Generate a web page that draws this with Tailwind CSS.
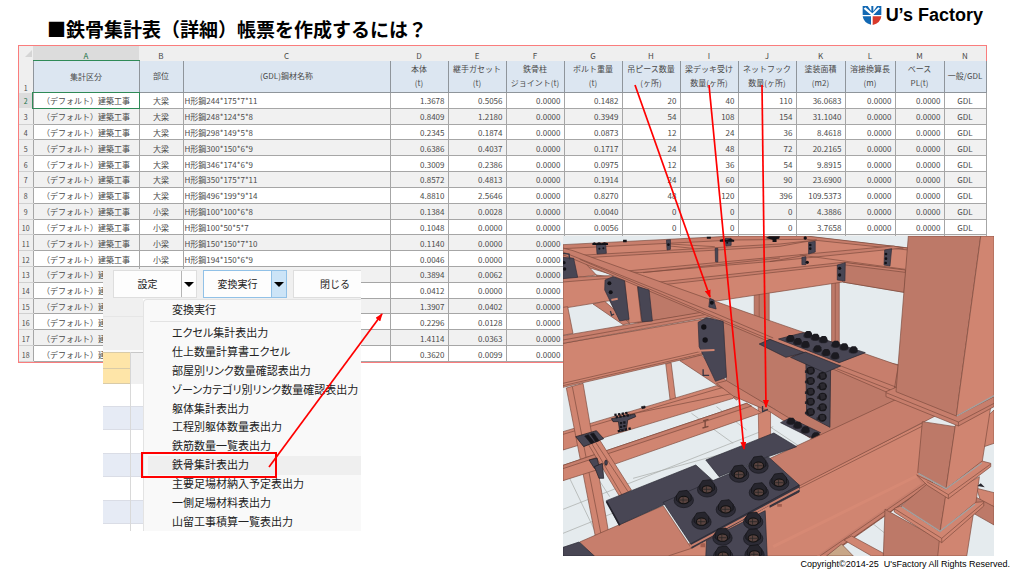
<!DOCTYPE html>
<html lang="ja">
<head>
<meta charset="utf-8">
<title>鉄骨集計表（詳細）帳票</title>
<script src="https://cdn.jsdelivr.net/npm/@tailwindcss/browser@4"></script>
</head>
<body class="bg-white font-['Noto_Sans_CJK_JP','Noto_Sans',sans-serif] text-black">
<main class="relative flex min-h-screen flex-col overflow-hidden">
  <header class="flex h-[45px] items-start justify-between pl-[47px] pr-[41px]">
    <h1 class="pt-[15px] text-[19px] leading-7 font-bold whitespace-nowrap">■鉄骨集計表（詳細）帳票を作成するには？</h1>
    <div class="flex items-center gap-1 pt-[3px]">
      <svg class="h-5 w-5" viewBox="0 0 60 60" aria-hidden="true">
        <path fill="#1268b3" d="M2 3H17L28 19V3H34V19L45 3H58V30H34L54 10L49 7L31 25L10 7L5 11L27 30H2Z"/>
        <path fill="#1268b3" d="M2 34H27V59Q5 54 2 34Z"/>
        <path fill="#d93a2b" d="M32 34H58Q56 54 32 60Z"/>
      </svg>
      <span class="font-['Liberation_Sans',sans-serif] text-lg leading-6 font-bold">U’s Factory</span>
    </div>
  </header>

  <section class="mr-[37px] ml-[18px] border border-[#fa7d7d]" aria-label="鉄骨集計表">
    <table class="h-[316px] w-full table-fixed border-collapse text-[8px] leading-[13px] text-[#4a4a4a]">
      <colgroup>
        <col class="w-[14px]"><col class="w-[106px]"><col class="w-[44px]"><col class="w-[207px]">
        <col class="w-[58px]"><col class="w-[58px]"><col class="w-[58px]"><col class="w-[58px]"><col class="w-[58px]"><col class="w-[58px]"><col class="w-[58px]">
        <col class="w-[49px]"><col class="w-[50px]"><col class="w-[49px]"><col class="w-[42px]">
      </colgroup>
      <thead id="head"></thead>
      <tbody id="rows"></tbody>
    </table>
  </section>

  <footer class="mt-auto flex justify-end pr-[14px] pb-[5px] font-['Liberation_Sans',sans-serif] text-[9px] leading-[14px] whitespace-pre">Copyright©2014-25  U'sFactory All Rights Reserved.</footer>

  <!-- Conversion menu laid over the sheet -->
  <section class="absolute top-[269px] left-[103px] flex h-[262px] w-[258px] flex-col overflow-hidden bg-white text-[#222]">
    <div class="flex h-[30px] shrink-0 gap-[6px] bg-[#f0f0f0] pt-px pb-px pl-[10px] text-[10px]">
      <div class="flex h-7 w-[84px] shrink-0 border border-[#dedede] bg-[#fdfdfd]">
        <button class="flex-1 pb-[2px]">設定</button>
        <button class="flex w-[15px] items-center justify-center border-l border-[#b5b5b5]" aria-label="設定のメニュー"><svg class="h-[5px] w-[10px]" viewBox="0 0 10 5"><path d="M0 0H10L5 5Z"/></svg></button>
      </div>
      <div class="flex h-7 w-[84px] shrink-0 border border-[#91c1e7] bg-[#fdfdfd]">
        <button class="flex-1 pb-[2px]">変換実行</button>
        <button class="flex w-[15px] items-center justify-center border-l border-[#91c1e7] bg-[#cce4f7]" aria-label="変換実行のメニュー"><svg class="h-[5px] w-[10px]" viewBox="0 0 10 5"><path d="M0 0H10L5 5Z"/></svg></button>
      </div>
      <button class="h-7 w-[84px] shrink-0 border border-[#dedede] bg-[#fdfdfd] pb-[2px]">閉じる</button>
    </div>
    <div class="flex min-h-0 flex-1">
      <div class="flex w-10 shrink-0 flex-col">
        <div class="h-[18px] border-b border-[#e6e6e6] bg-[#f0f0f0]"></div>
        <div class="h-[35px] border-b-2 border-[#fafafa] bg-[#f0f0f0]"></div>
        <div class="flex h-8">
          <div class="flex w-7 flex-col border-r border-[#d6d6d6]"><div class="flex-1 border-y border-[#d9cba8] bg-[#fee5a8]"></div><div class="flex-1 border-b border-[#d9cba8] bg-[#fee5a8]"></div></div>
          <div class="flex-1 border-t border-[#c8c8c8] bg-[#f0f0f0]"></div>
        </div>
        <div class="relative flex flex-1 flex-col">
          <div class="h-[22px]"></div><div class="h-6 border-y border-[#dadde6] bg-[#e6ebf5]"></div>
          <div class="h-[23px]"></div><div class="h-6 border-y border-[#dadde6] bg-[#e6ebf5]"></div>
          <div class="h-[23px]"></div><div class="h-6 border-y border-[#dadde6] bg-[#e6ebf5]"></div>
          <div class="absolute inset-y-0 left-[27px] w-px bg-[#d9d9d9]"></div>
        </div>
      </div>
      <div class="flex flex-1 flex-col rounded-tl border-t border-l border-[#e3e3e3] bg-[#f9f9f9] text-[11px] leading-4 [font-feature-settings:'palt']" role="menu">
        <button role="menuitem" class="h-[21px] pb-1 pl-7 text-left">変換実行</button>
        <hr class="ml-[6px] border-[#e3e3e3]">
        <div class="mt-[2px] flex flex-1 flex-col" id="menu"></div>
      </div>
    </div>
  </section>

  <!-- Steel frame model -->
  <svg class="absolute top-[236px] left-[55%] h-[320px] w-[42.1%]" viewBox="10 18 1292 960" preserveAspectRatio="none" role="img" aria-label="鉄骨モデル">
    <defs>
      <g id="bolt"><ellipse cy="6" rx="29" ry="22" fill="#2c2b35" stroke="#17161c" stroke-width="2"/><path d="M-22-8L-14-21L10-24L22-10V6L10 14H-12L-22 6Z" fill="#26252d" stroke="#101014" stroke-width="2"/><ellipse cy="5" rx="15" ry="11" fill="#59433f" stroke="#111" stroke-width="3"/><path d="M-2-4V14M-12 5H12" stroke="#222" stroke-width="2"/></g>
      <g id="nut"><ellipse rx="14" ry="8" cy="4" fill="#2b2932"/><path d="M-10-5L-4-10H7L12-4V5L6 10H-6L-11 5Z" fill="#1b1a20"/></g>
      <g id="side"><path d="M-17 3H0" stroke="#29272e" stroke-width="8"/><ellipse rx="13" ry="12" fill="#18171b"/><path d="M-8-7L6-9L9 5L-5 9Z" fill="#2b2930"/></g>
    </defs>
    <rect x="10" y="18" width="1292" height="960" fill="#e5ebee"/>
    <g stroke="#a5a7a4" stroke-width="2" fill="none">
      <path d="M10 838L640 590M10 910L380 760M30 745L110 912M60 660L150 800M395 550L520 640M470 530L560 600M220 745L640 630M630 590L720 650M900 850L975 910"/>
    </g>
    <!-- distant columns and rails -->
    <g stroke="#8c5142" stroke-width="2">
      <path fill="#bd7968" d="M583 190H628V290H583ZM815 155H838V350H815Z"/>
      <path fill="#c77e6c" d="M598 190V280M826 158V340"/>
      <path fill="#d08571" d="M595 530H632V635H597Z"/>
    </g>
    <!-- roof beams -->
    <g stroke="#7b4a3d" stroke-width="2">
      <path fill="#d08571" d="M10 48L520 20H750L1045 54L1032 187L848 156L470 213L380 200L10 90Z"/>
      <path fill="#bd7968" d="M852 97L1038 122L1032 187L848 156Z"/>
      <path fill="#c77e6c" d="M10 44L520 18H740L1045 54V60L740 28L520 30L10 56Z"/>
      <path fill="#c77e6c" d="M60 76L660 42L770 30L720 38L660 49L80 83ZM190 124L1000 48L1030 54L660 92L240 128ZM290 157L850 97L1036 120V127L850 104L320 163Z"/>
      <path fill="none" d="M330 42L465 50M330 48L400 55M720 75L1036 118M250 128L660 84M630 95L740 75"/>
    </g>
    <!-- left bays -->
    <g stroke="#7b4a3d" stroke-width="2">
      <path fill="#bd7968" d="M110 135L230 150L450 245L240 278L180 270Z"/>
      <path fill="#c77e6c" d="M10 75L60 82L110 135L10 148Z"/>
      <path fill="#d08571" d="M10 148L150 138L175 208L10 235Z"/>
      <path fill="#c77e6c" d="M10 143L160 137V144L10 156ZM100 222L135 214L210 280L190 284Z"/>
      <path fill="#d08571" d="M10 232L24 230L40 310L10 316ZM195 150L232 160L245 275L208 280Z"/>
      <path fill="#d08571" d="M10 340L460 262L470 365L10 472Z"/>
      <path fill="#c77e6c" d="M10 317L430 246L462 258L10 340Z"/>
      <path fill="none" d="M10 330L445 252M10 460L420 365M10 467L465 362"/>
      <path fill="#c77e6c" d="M360 392L425 375L545 500L530 510L490 478Z"/>
      <path fill="#d08571" d="M318 402L334 398L348 510H331Z"/>
    </g>
    <!-- lower rails and column -->
    <g stroke="#7b4a3d" stroke-width="2">
      <path fill="#d08571" d="M10 605L470 467L530 490L520 505L10 660Z"/>
      <path fill="none" d="M10 613L490 472M200 555L520 490"/>
      <path fill="#d08571" d="M20 474L70 460L148 915L108 925Z"/>
      <path fill="none" d="M38 470L125 918"/>
      <path fill="#d08571" d="M10 706L560 520L605 548L155 706L10 752Z"/>
      <path fill="#c77e6c" d="M10 706L560 520L575 528L10 716Z"/>
      <path fill="#d08571" d="M84 640L120 630L215 780L180 800Z"/>
      <path fill="none" d="M94 637L188 797M106 634L205 785"/>
      <path fill="none" d="M436 573V592M430 573L446 568M428 594L446 589" stroke-width="4"/>
    </g>
    <g fill="#484654" stroke="#19181e" stroke-width="2">
      <path d="M48 620L110 602L132 626L72 650ZM88 690L112 684L118 708L104 715ZM155 566L225 552L228 560L204 570L200 600L180 605L176 575L160 575Z"/>
      <path fill="#17161c" d="M75 618L86 614L104 637L94 641ZM92 612L102 609L118 632L108 636ZM245 530L256 528V534L247 536Z"/>
      <path d="M104 710L128 700L132 745H118Z"/><ellipse cx="139" cy="698" rx="4" ry="8"/>
    </g>
    <path d="M164 555L208 548M168 562L212 555M174 604L215 595M184 576V600M194 574V598" stroke="#17161c" stroke-width="7" stroke-dasharray="7 4"/>
    <!-- primary diagonal girder -->
    <g stroke="#7b4a3d" stroke-width="2">
      <path fill="#bd7968" d="M490 275L640 330L1045 410L1150 520L1020 520L780 630L640 535L500 458Z"/>
      <path fill="#c77e6c" d="M10 54L40 62L455 210L630 272L1015 406L1000 495L640 340L10 74Z"/>
      <path fill="none" d="M10 66L450 243L640 324M60 88L440 250L640 333M830 640L1010 560M840 640L1140 510M835 405L1010 472M830 416L1005 485"/>
      <path fill="#c77e6c" d="M470 460L500 452L790 625L775 640L630 545L520 498Z"/>
    </g>
    <!-- gusset plates -->
    <g fill="#484654" stroke="#302e39" stroke-width="2">
      <path d="M10 82L42 85L54 142L10 146Z"/><path d="M136 150L160 140L194 152L208 268L180 273L135 180Z"/><path d="M234 170L268 180L278 273L247 275Z"/>
      <path d="M415 277L440 263L490 274L500 442L467 454L418 350Z"/><path d="M110 45L138 43L140 70L112 72ZM320 30L332 29V58L322 60ZM466 55H474V96L467 95ZM496 25H514V46L498 48Z"/>
      <path d="M450 205L462 210L469 237L447 231Z"/>
      <path d="M746 37L766 34V66L746 72ZM726 82L738 80V104H726ZM832 105L856 98L855 153L832 150ZM974 60L995 56L990 108L972 105Z"/>
    </g>
    <path d="M155 210L174 206M415 362L464 360" stroke="#d08571" stroke-width="6"/>
    <g fill="#121116">
      <circle cx="149" cy="160" r="6"/><circle cx="153" cy="187" r="6"/><circle cx="432" cy="291" r="8"/><circle cx="436" cy="330" r="8"/><circle cx="13" cy="98" r="5"/><circle cx="15" cy="117" r="5"/><circle cx="456" cy="218" r="6"/>
      <path d="M98 40L104 37L110 40L118 37L126 40L134 37L145 40V45H98ZM480 29L490 27L500 30L512 26L523 30V35H480ZM618 24L628 19H660L658 26L650 27V36H638V29ZM190 29H201V37H190ZM441 20H453V26H441Z"/>
      <circle cx="119" cy="56" r="3"/><circle cx="131" cy="55" r="3"/><circle cx="326" cy="44" r="4"/><circle cx="502" cy="38" r="3"/><circle cx="751" cy="45" r="4"/><circle cx="751" cy="56" r="4"/><circle cx="742" cy="97" r="5"/><circle cx="839" cy="115" r="5"/><circle cx="839" cy="135" r="5"/><circle cx="978" cy="72" r="4"/><circle cx="978" cy="86" r="4"/><circle cx="977" cy="99" r="4"/><circle cx="736" cy="24" r="5"/>
    </g>
    <path d="M430 418V436H448M152 243L156 256L163 252M10 70L28 72L30 88M608 528V545L624 538" stroke="#373642" stroke-width="4" fill="none"/>
    <!-- splice in the middle -->
    <g stroke="#25242d" stroke-width="2" fill="#484654">
      <path d="M598 342L630 328L735 368L678 382Z"/>
      <path d="M656 327L730 308L916 368L838 398Z"/>
      <path d="M738 402L812 418L810 592L740 555Z"/>
      <path d="M692 382L736 366L842 408L795 428Z"/>
      <path d="M662 578L690 564L782 608L750 622Z"/>
    </g>
    <use href="#nut" x="691" y="325"/><use href="#nut" x="713" y="334"/><use href="#nut" x="736" y="343"/><use href="#nut" x="744" y="313"/><use href="#nut" x="766" y="321"/><use href="#nut" x="790" y="328"/><use href="#nut" x="772" y="356"/><use href="#nut" x="798" y="367"/><use href="#nut" x="825" y="377"/><use href="#nut" x="827" y="342"/><use href="#nut" x="852" y="350"/><use href="#nut" x="880" y="359"/>
    <use href="#side" x="752" y="422"/><use href="#side" x="788" y="438"/><use href="#side" x="752" y="453"/><use href="#side" x="788" y="469"/><use href="#side" x="752" y="485"/><use href="#side" x="788" y="500"/><use href="#side" x="752" y="515"/><use href="#side" x="788" y="532"/><use href="#side" x="752" y="546"/><use href="#side" x="787" y="563"/>
    <use href="#nut" x="693" y="573"/><use href="#nut" x="713" y="585"/><use href="#nut" x="736" y="599"/><use href="#nut" x="767" y="617"/>
    <!-- front girder -->
    <g stroke="#7b4a3d" stroke-width="2">
      <path fill="#d08571" d="M320 978L718 765L1090 577L1080 725L1125 752L805 978Z"/>
      <path fill="#c77e6c" d="M620 690L1035 496L1145 548L718 768Z"/>
      <path fill="#c77e6c" d="M60 936L310 827L395 955L325 978H100Z"/>
      <path fill="none" d="M718 775L1090 587M1120 755L800 978M1108 755L780 978"/>
      <path fill="#c77e6c" stroke="none" d="M1070 738L1120 755L800 978H770L1085 760Z"/>
      <path fill="none" d="M1120 755L800 978M1108 752L780 978"/>
      <path fill="#d08571" d="M852 930L875 918L980 975V978H935ZM1250 775L1302 788V830L1262 815Z"/>
      <path fill="#bd7968" d="M1245 800L1302 830V885L1240 850Z"/>
      <path fill="#c8a687" d="M800 978L845 942L880 978Z"/>
    </g>
    <path d="M640 950L1070 738" stroke="#dd8e78" stroke-width="9" opacity=".5"/>
    <!-- front splice plates -->
    <g fill="#484654" stroke="#292833" stroke-width="2">
      <path d="M140 812L408 705L460 752L310 825L178 885Z"/>
      <path d="M438 690L642 609L710 650L620 682L478 740Z"/>
      <path d="M440 932L616 842L622 978H438Z"/>
      <path d="M10 952L58 936L104 978H10Z"/>
      <path d="M310 817L625 680L718 765L395 945Z"/>
      <path fill="#363541" d="M395 940L718 765V776L396 955ZM630 826L718 778V786L630 832Z"/>
    </g>
    <path d="M390 950L718 776" stroke="#c77e6c" stroke-width="6"/>
    <path d="M140 814L180 886" stroke="#23222b" stroke-width="5"/>
    <use href="#bolt" x="372" y="805"/><use href="#bolt" x="442" y="773"/><use href="#bolt" x="538" y="729"/><use href="#bolt" x="596" y="702"/><use href="#bolt" x="425" y="870"/><use href="#bolt" x="498" y="833"/><use href="#bolt" x="597" y="782"/><use href="#bolt" x="658" y="753"/>
    <use href="#bolt" x="488" y="918"/><use href="#bolt" x="580" y="870"/><use href="#bolt" x="580" y="920"/><use href="#bolt" x="490" y="972"/><use href="#bolt" x="584" y="968"/>
    <path d="M652 822H666V830H652ZM422 940H436V952H422Z" fill="#a45f4f"/>
    <!-- box column -->
    <g stroke="#7b4a3d" stroke-width="2">
      <path fill="#d08571" d="M1280 560L1302 540V640L1272 650Z"/>
      <path fill="#bd7968" d="M975 838L1140 930L1137 978H970Z"/>
      <path fill="#d08571" d="M1138 930L1240 850L1220 978H1133Z"/>
      <path fill="#bd7968" d="M1110 755L1158 795L1140 905L1020 830Z"/>
      <path fill="#d08571" d="M1157 795L1258 740L1247 822L1140 905Z"/>
      <path fill="#d08571" d="M1003 835L1022 828L1140 905L1247 817L1271 815V828L1145 938L1003 846Z"/>
      <path fill="none" d="M1003 836L1145 925L1271 818M1145 925V938"/>
      <path fill="#bd7968" d="M1087 575L1186 590L1158 776L1073 728Z"/>
      <path fill="#d08571" d="M1186 585L1292 530L1266 698L1158 776Z"/>
      <path fill="#d08571" d="M1070 735L1158 777L1266 693L1292 700V710L1165 806L1102 766Z"/>
      <path fill="none" d="M1100 755L1165 794L1292 702M1165 794V806"/>
      <path fill="#c77e6c" d="M978 485L1008 472L1190 555L1302 495V530L1195 588L978 500Z"/>
      <path fill="none" d="M978 488L1195 576L1302 520M1195 576V588"/>
      <path fill="#bd7968" d="M1045 18H1262L1195 510L1189 558L1008 485Z"/>
      <path fill="#d08571" d="M1262 18H1302V500L1189 558L1195 510Z"/>
    </g>
    <path fill="none" stroke="#a2a2a2" stroke-width="4" d="M1190 558L1302 497M1075 730L1158 776L1265 699M1025 830L1140 904L1245 822"/>
    <path d="M1252 768L1262 760L1274 772Z" fill="#26252d"/>
  </svg>

  <!-- Callouts -->
  <svg class="pointer-events-none absolute top-0 left-0 h-[576px] w-full" viewBox="0 0 1024 576" preserveAspectRatio="none" aria-hidden="true">
    <defs><marker id="tip" viewBox="0 0 8 6" refX="7" refY="3" markerWidth="8" markerHeight="6" markerUnits="userSpaceOnUse" orient="auto"><path d="M0 0L8 3L0 6Z" fill="#f00"/></marker></defs>
    <g stroke="#f00" stroke-width="1.7" fill="none">
      <path marker-end="url(#tip)" d="M635 85L710 297"/><path marker-end="url(#tip)" d="M709 85L744 449"/><path marker-end="url(#tip)" d="M762 85L766 407"/><path marker-end="url(#tip)" d="M269 467L382 314"/>
    </g>
    <rect x="142" y="453" width="134" height="24" fill="none" stroke="#f00" stroke-width="2"/>
  </svg>
</main>
<script>
const names = [['集計区分'],['部位'],['(GDL)鋼材名称'],['本体','(t)'],['継手ガセット','(t)'],['鉄骨柱','ジョイント(t)'],['ボルト重量','(t)'],['吊ピース数量','(ヶ所)'],['梁デッキ受け','数量(ヶ所)'],['ネットフック','数量(ヶ所)'],['塗装面積','(m2)'],['溶接換算長','(m)'],['ベース','PL(t)'],['一般/GDL']];
const data = [
 ['大梁','H形鋼244*175*7*11','1.3678','0.5056','0.0000','0.1482','20','40','110','36.0683','0.0000','0.0000','GDL'],
 ['大梁','H形鋼248*124*5*8','0.8409','1.2180','0.0000','0.3949','54','108','154','31.1040','0.0000','0.0000','GDL'],
 ['大梁','H形鋼298*149*5*8','0.2345','0.1874','0.0000','0.0873','12','24','36','8.4618','0.0000','0.0000','GDL'],
 ['大梁','H形鋼300*150*6*9','0.6386','0.4037','0.0000','0.1717','24','48','72','20.2165','0.0000','0.0000','GDL'],
 ['大梁','H形鋼346*174*6*9','0.3009','0.2386','0.0000','0.0975','12','36','54','9.8915','0.0000','0.0000','GDL'],
 ['大梁','H形鋼350*175*7*11','0.8572','0.4813','0.0000','0.1914','24','60','90','23.6900','0.0000','0.0000','GDL'],
 ['大梁','H形鋼496*199*9*14','4.8810','2.5646','0.0000','0.8270','48','120','396','109.5373','0.0000','0.0000','GDL'],
 ['小梁','H形鋼100*100*6*8','0.1384','0.0028','0.0000','0.0040','0','0','0','4.3886','0.0000','0.0000','GDL'],
 ['小梁','H形鋼100*50*5*7','0.1048','0.0000','0.0000','0.0056','0','0','0','3.7658','0.0000','0.0000','GDL'],
 ['小梁','H形鋼150*150*7*10','0.1140','0.0000','0.0000'],
 ['小梁','H形鋼194*150*6*9','0.0046','0.0000','0.0000'],
 ['','','0.3894','0.0062','0.0000'],['','','0.0412','0.0000','0.0000'],['','','1.3907','0.0402','0.0000'],
 ['','','0.2296','0.0128','0.0000'],['','','1.4114','0.0363','0.0000'],['','','0.3620','0.0099','0.0000']];
document.getElementById('head').innerHTML =
  '<tr class="h-[14px] bg-[#efefef]"><td class="p-0"><svg class="ml-auto mr-px h-[7px] w-[7px]" viewBox="0 0 7 7"><path d="M7 0V7H0Z" fill="#d5d5d5"/></svg></td>' +
  [...'ABCDEFGHIJKLMN'].map((c, i) => `<th class="${i ? 'p-0 pt-[5px] leading-[9px] font-normal' : 'border-b border-[#2f8a57] bg-[#dcdcdc] p-0 pt-[5px] leading-[9px] font-normal text-[#217346]'}">${c}</th>`).join('') + '</tr>' +
  '<tr class="h-8 bg-[#dce6f1]"><th class="bg-[#efefef] p-0 align-bottom text-[7px] leading-[9px] font-normal">1</th>' +
  names.map(n => `<th class="border-x border-b border-[#8f959b] p-0 leading-[14px] font-normal whitespace-nowrap">${n.join('<br>')}</th>`).join('') + '</tr>';
document.getElementById('rows').innerHTML = data.map((r, i) => {
  const cells = ['（デフォルト）建築工事', ...r];
  while (cells.length < 14) cells.push('');
  return `<tr class="h-[15px] ${i % 2 ? 'bg-[#f1f1f1]' : 'bg-white'}"><th class="${i ? 'border-b border-[#d0d0d0] bg-[#efefef] p-0 pt-[2px] text-[7px] leading-3 font-normal' : 'bg-[#dcdcdc] p-0 pt-[2px] text-[7px] leading-3 font-normal text-[#217346]'}">${i + 2}</th>` +
    cells.map((c, j) => {
      const align = j == 2 ? 'text-left' : (j < 2 || j == 13) ? 'text-center' : 'pr-[3px] text-right';
      const sel = !i && !j ? 'outline outline-[#2f8a57]' : '';
      return `<td class="border border-[#a6a6a6] p-0 px-px pt-[2px] leading-3 whitespace-nowrap ${align} ${sel}">${c}</td>`;
    }).join('') + '</tr>';
}).join('');
document.getElementById('menu').innerHTML = ['エクセル集計表出力','仕上数量計算書エクセル','部屋別リンク数量確認表出力','ゾーンカテゴリ別リンク数量確認表出力','躯体集計表出力','工程別躯体数量表出力','鉄筋数量一覧表出力','鉄骨集計表出力','主要足場材納入予定表出力','一側足場材料表出力','山留工事積算一覧表出力']
  .map(t => `<button role="menuitem" class="ml-1 min-h-0 flex-1 pb-[2px] pl-6 text-left whitespace-nowrap ${t == '鉄骨集計表出力' ? 'bg-[#efefef]' : ''}">${t}</button>`).join('');
</script>
</body>
</html>
